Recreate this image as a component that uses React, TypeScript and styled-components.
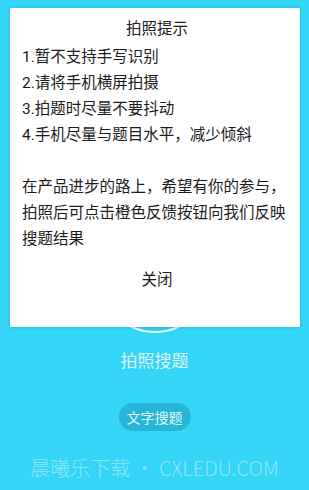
import styled, { createGlobalStyle } from 'styled-components';

const GlobalStyle = createGlobalStyle`
  html, body {
    margin: 0;
    padding: 0;
  }
  body {
    font-family: Roboto, "Noto Sans CJK SC", sans-serif;
    overflow: hidden;
  }
`;

const tips = [
  '1.暂不支持手写识别',
  '2.请将手机横屏拍摄',
  '3.拍题时尽量不要抖动',
  '4.手机尽量与题目水平，减少倾斜',
];

export default function App() {
  return (
    <>
      <GlobalStyle />
      <Page>
        <CameraButton />
        <CameraLabel>拍照搜题</CameraLabel>
        <TextSearchButton>文字搜题</TextSearchButton>
        <Watermark>晨曦乐下载 • CXLEDU.COM</Watermark>

        <Dialog>
          <DialogTitle>拍照提示</DialogTitle>
          <DialogBody>
            {tips.map((tip) => (
              <Line key={tip}>{tip}</Line>
            ))}
            <Line>&nbsp;</Line>
            <Paragraph>
              在产品进步的路上，希望有你的参与，拍照后可点击橙色反馈按钮向我们反映搜题结果
            </Paragraph>
          </DialogBody>
          <CloseButton>关闭</CloseButton>
        </Dialog>
      </Page>
    </>
  );
}

const Page = styled.div`
  position: relative;
  display: flex;
  flex-direction: column;
  align-items: center;
  width: 309px;
  height: 490px;
  background: #34d5f7;
  overflow: hidden;
`;

const CameraButton = styled.div`
  box-sizing: border-box;
  margin-top: 219px;
  width: 114px;
  height: 114px;
  border-radius: 50%;
  border: 2px solid rgba(255, 255, 255, 0.85);
  background: #30cdef;
`;

const CameraLabel = styled.div`
  margin-top: 15px;
  font-family: "Noto Sans CJK SC", sans-serif;
  font-size: 17px;
  line-height: 24px;
  color: #dcf6fc;
`;

const TextSearchButton = styled.div`
  margin-top: 31px;
  height: 28px;
  padding: 0 8px;
  border-radius: 14px;
  background: #27b6d7;
  font-family: "Noto Sans CJK SC", sans-serif;
  font-size: 14px;
  line-height: 28px;
  color: #e4f7fb;
`;

const Watermark = styled.div`
  margin-top: 23px;
  font-family: "Noto Sans CJK SC", sans-serif;
  font-size: 20px;
  font-weight: 300;
  line-height: 28px;
  color: rgba(255, 255, 255, 0.45);
  white-space: nowrap;
`;

const Dialog = styled.div`
  position: absolute;
  top: 8px;
  left: 10px;
  width: 290px;
  box-sizing: border-box;
  padding: 8px 8px 34px 12px;
  background: #ffffff;
  box-shadow: 0 0 3px rgba(0, 60, 90, 0.25);
  color: #1c1c1c;
`;

const DialogTitle = styled.div`
  text-align: center;
  font-size: 15.5px;
  line-height: 26px;
`;

const DialogBody = styled.div`
  margin-top: 2px;
  font-size: 15.5px;
  line-height: 26px;
`;

const Line = styled.div`
  white-space: nowrap;
`;

const Paragraph = styled.div`
  width: 268px;
`;

const CloseButton = styled.div`
  margin-top: 15px;
  text-align: center;
  font-size: 15.5px;
  line-height: 26px;
`;
